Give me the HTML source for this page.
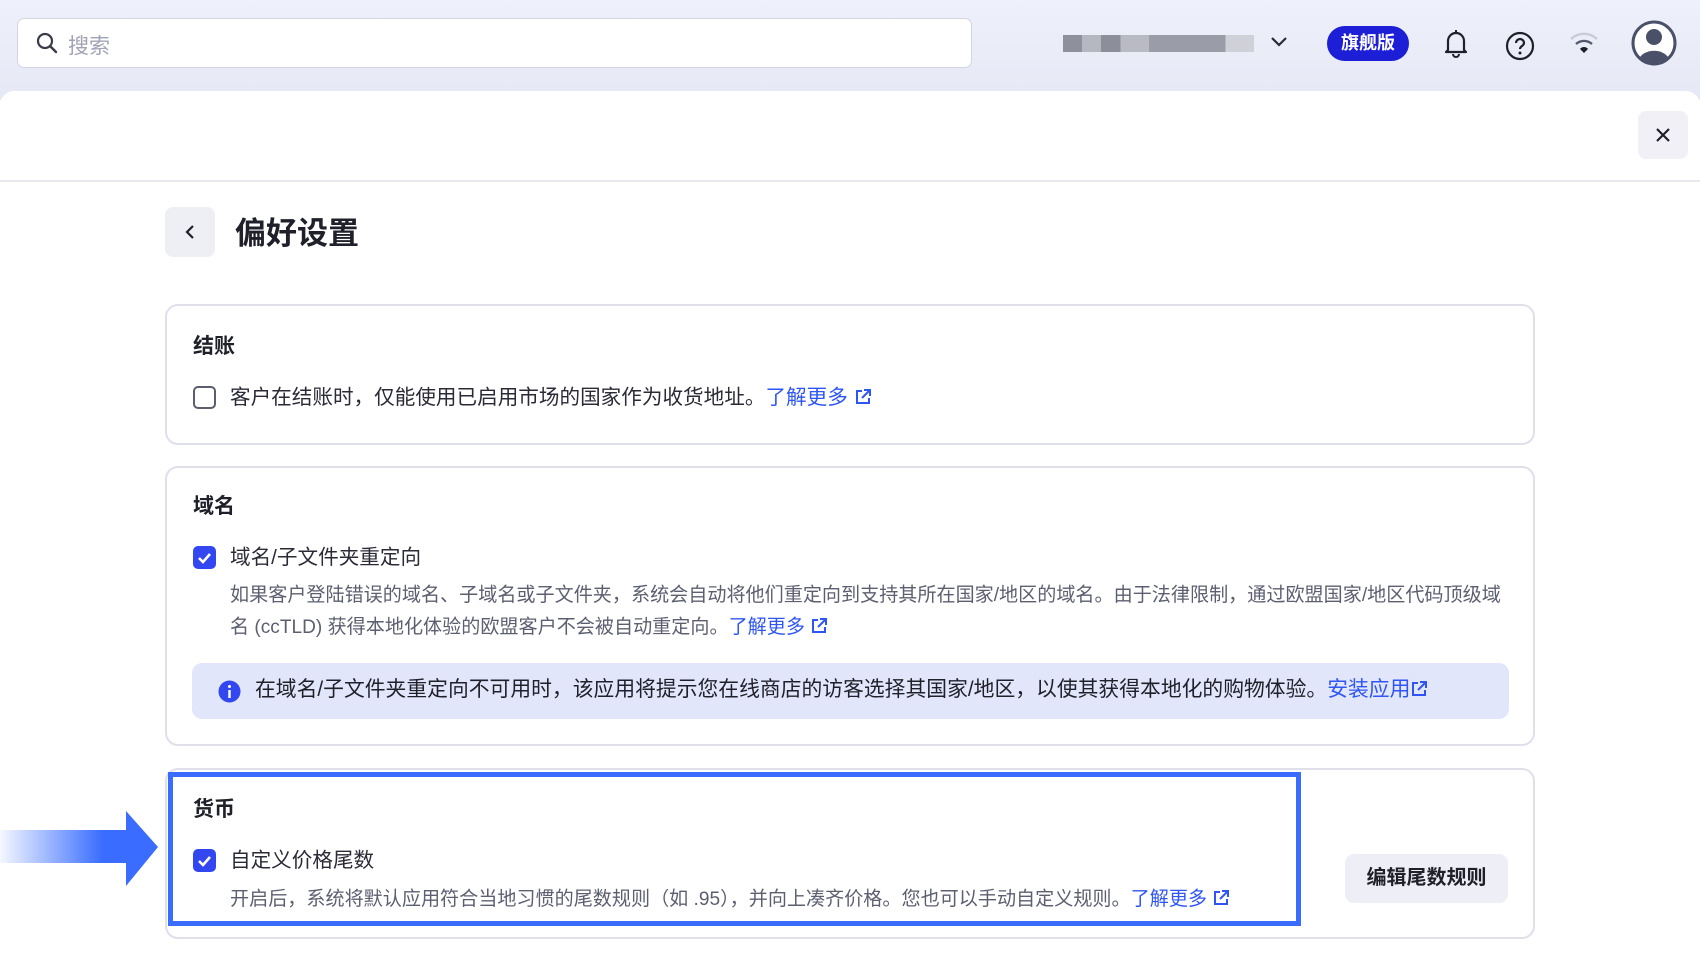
<!DOCTYPE html>
<html><head><meta charset="utf-8"><style>
*{box-sizing:border-box;margin:0;padding:0}
body{width:1700px;height:974px;overflow:hidden;background:#fff;font-family:"Liberation Sans","Noto Sans CJK SC",sans-serif;color:#1f2029;position:relative}
.top{position:absolute;left:0;top:0;width:1700px;height:100px;background:linear-gradient(#eef0fb,#e6e8f5)}
.search{position:absolute;left:17px;top:18px;width:955px;height:50px;background:#fff;border:1px solid #d3d5e2;border-radius:7px}
.search span{position:absolute;left:50px;top:11px;font-size:21px;color:#a0a3b5}
.panel{position:absolute;left:0;top:91px;width:1700px;height:883px;background:#fff;border-radius:14px 14px 0 0}
.hline{position:absolute;left:0;top:180px;width:1700px;height:2px;background:#e8e9ef}
.close{position:absolute;left:1638px;top:111px;width:50px;height:48px;background:#f0f0f6;border-radius:8px}
.back{position:absolute;left:165px;top:207px;width:50px;height:50px;background:#eeeef5;border-radius:8px}
.title{position:absolute;left:235px;top:214px;font-size:31px;font-weight:bold;line-height:40px}
.card{position:absolute;left:165px;width:1370px;border:2px solid #dfe0ea;border-radius:13px}
.h{position:absolute;left:193px;font-size:21px;font-weight:bold;line-height:28px}
.t{position:absolute;left:230px;font-size:20.6px;line-height:28px;color:#2a2b36}
.d{position:absolute;left:230px;font-size:19.1px;line-height:32px;color:#5c5f70}
.cb{position:absolute;left:193px;width:23px;height:23px;border-radius:5px}
.cb.on{background:#3347f0}
.cb.off{border:2px solid #5b5e6c}
a{color:#2f55f5;text-decoration:none}
.info{position:absolute;left:192px;top:663px;width:1317px;height:56px;background:#e2e6fb;border-radius:10px}
</style></head><body>
<div class="top">
 <div class="search"><svg style="position:absolute;left:18px;top:13px" width="22" height="22" viewBox="0 0 22 22"><circle cx="9" cy="9" r="7" fill="none" stroke="#3a3c4a" stroke-width="2.2"/><path d="M14 14l6 6" stroke="#3a3c4a" stroke-width="2.4" stroke-linecap="round"/></svg><span>搜索</span></div>
 <div style="position:absolute;left:1063px;top:35px;width:191px;height:17px;background:linear-gradient(90deg,#8e909c 0 10%,#b5b7c1 10% 20%,#8c8e9a 20% 30%,#b9bac4 30% 45%,#9a9ca8 45% 85%,#cfd0d8 85%)"></div>
 <svg style="position:absolute;left:1270px;top:35px" width="18" height="14"><path d="M2 3l7 7 7-7" fill="none" stroke="#2a2b36" stroke-width="2.2"/></svg>
 <div style="position:absolute;left:1327px;top:26px;width:82px;height:35px;background:#1c1fd6;border-radius:18px;color:#fff;font-size:18px;font-weight:bold;text-align:center;line-height:35px">旗舰版</div>
 <svg style="position:absolute;left:1443px;top:28px" width="26" height="30" viewBox="0 0 26 30"><path d="M5 22V13a8 8 0 0116 0v9l2 2H3z" fill="none" stroke="#1f2029" stroke-width="2.2" stroke-linejoin="round"/><path d="M10 26a3 3 0 006 0" fill="none" stroke="#1f2029" stroke-width="2"/><path d="M13 2v3" stroke="#1f2029" stroke-width="2"/></svg>
 <svg style="position:absolute;left:1505px;top:31px" width="30" height="30" viewBox="0 0 30 30"><circle cx="15" cy="15" r="13" fill="none" stroke="#1f2029" stroke-width="2.2"/><path d="M11 12a4 4 0 118 0c0 3-4 3-4 6" fill="none" stroke="#1f2029" stroke-width="2.2"/><circle cx="15" cy="22" r="1.5" fill="#1f2029"/></svg>
 <svg style="position:absolute;left:1568px;top:30px" width="32" height="26" viewBox="0 0 32 26"><path d="M3 9a19 19 0 0126 0" fill="none" stroke="#c9cbd6" stroke-width="2.4"/><path d="M8 14a12 12 0 0116 0" fill="none" stroke="#55586a" stroke-width="2.4"/><path d="M12 19a5 5 0 018 0l-4 4z" fill="#1f2029"/></svg>
 <svg style="position:absolute;left:1631px;top:20px" width="46" height="46" viewBox="0 0 46 46"><circle cx="23" cy="23" r="21" fill="#fff" stroke="#4a5068" stroke-width="3"/><circle cx="23" cy="17" r="8" fill="#4a5068"/><path d="M9 37a16 12 0 0128 0a20 20 0 01-28 0z" fill="#4a5068"/></svg>
</div>
<div class="panel"></div>
<div class="hline"></div>
<div class="close"><svg style="position:absolute;left:17px;top:16px" width="16" height="16"><path d="M2 2l12 12M14 2L2 14" stroke="#1f2029" stroke-width="2.2"/></svg></div>
<div class="back"><svg style="position:absolute;left:18px;top:17px" width="14" height="16"><path d="M10 2L4 8l6 6" fill="none" stroke="#1f2029" stroke-width="2.2"/></svg></div>
<div class="title">偏好设置</div>

<div class="card" style="top:304px;height:141px"></div>
<div class="h" style="top:333px">结账</div>
<div class="cb off" style="top:386px"></div>
<div class="t" style="top:384px">客户在结账时，仅能使用已启用市场的国家作为收货地址。<a>了解更多 <svg width="18" height="18" viewBox="0 0 18 18" style="vertical-align:-2px"><path d="M8 3H3v12h12v-5M10 2h6v6M16 2l-8 8" fill="none" stroke="#2f55f5" stroke-width="2"/></svg></a></div>

<div class="card" style="top:466px;height:280px"></div>
<div class="h" style="top:493px">域名</div>
<div class="cb on" style="top:546px"><svg width="23" height="23"><path d="M6 12l4 4 7-8" fill="none" stroke="#fff" stroke-width="2.6"/></svg></div>
<div class="t" style="top:544px">域名/子文件夹重定向</div>
<div class="d" style="top:580px">如果客户登陆错误的域名、子域名或子文件夹，系统会自动将他们重定向到支持其所在国家/地区的域名。由于法律限制，通过欧盟国家/地区代码顶级域<br>名 (ccTLD) 获得本地化体验的欧盟客户不会被自动重定向。<a>了解更多 <svg width="18" height="18" viewBox="0 0 18 18" style="vertical-align:-2px"><path d="M8 3H3v12h12v-5M10 2h6v6M16 2l-8 8" fill="none" stroke="#2f55f5" stroke-width="2"/></svg></a></div>
<div class="info"><svg style="position:absolute;left:26px;top:17px" width="23" height="23"><circle cx="11.5" cy="11.5" r="11" fill="#3347f0"/><rect x="10.3" y="10" width="2.4" height="8" fill="#fff"/><circle cx="11.5" cy="6.5" r="1.5" fill="#fff"/></svg><div style="position:absolute;left:63px;top:13px;font-size:20.8px;line-height:28px;color:#1f2029;white-space:nowrap">在域名/子文件夹重定向不可用时，该应用将提示您在线商店的访客选择其国家/地区，以使其获得本地化的购物体验。<a>安装应用<svg width="18" height="18" viewBox="0 0 18 18" style="vertical-align:-2px"><path d="M8 3H3v12h12v-5M10 2h6v6M16 2l-8 8" fill="none" stroke="#2f55f5" stroke-width="2"/></svg></a></div></div>

<div class="card" style="top:768px;height:171px"></div>
<div class="h" style="top:796px">货币</div>
<div class="cb on" style="top:849px"><svg width="23" height="23"><path d="M6 12l4 4 7-8" fill="none" stroke="#fff" stroke-width="2.6"/></svg></div>
<div class="t" style="top:847px">自定义价格尾数</div>
<div class="d" style="top:884px">开启后，系统将默认应用符合当地习惯的尾数规则（如 .95），并向上凑齐价格。您也可以手动自定义规则。<a>了解更多 <svg width="18" height="18" viewBox="0 0 18 18" style="vertical-align:-2px"><path d="M8 3H3v12h12v-5M10 2h6v6M16 2l-8 8" fill="none" stroke="#2f55f5" stroke-width="2"/></svg></a></div>
<div style="position:absolute;left:1345px;top:854px;width:163px;height:49px;background:#eeeef6;border-radius:9px;font-size:20px;font-weight:bold;text-align:center;line-height:49px">编辑尾数规则</div>
<div style="position:absolute;left:168px;top:772px;width:1133px;height:154px;border:5px solid #3a6dff"></div>
<svg style="position:absolute;left:0;top:810px" width="160" height="78" viewBox="0 0 160 78"><defs><linearGradient id="g" x1="0" x2="1"><stop offset="0" stop-color="#3a6dff" stop-opacity="0.05"/><stop offset="0.8" stop-color="#3a6dff"/></linearGradient></defs><rect x="0" y="20" width="128" height="33" fill="url(#g)"/><path d="M126 1L158 37L126 76z" fill="#3a6dff"/></svg>
</body></html>
